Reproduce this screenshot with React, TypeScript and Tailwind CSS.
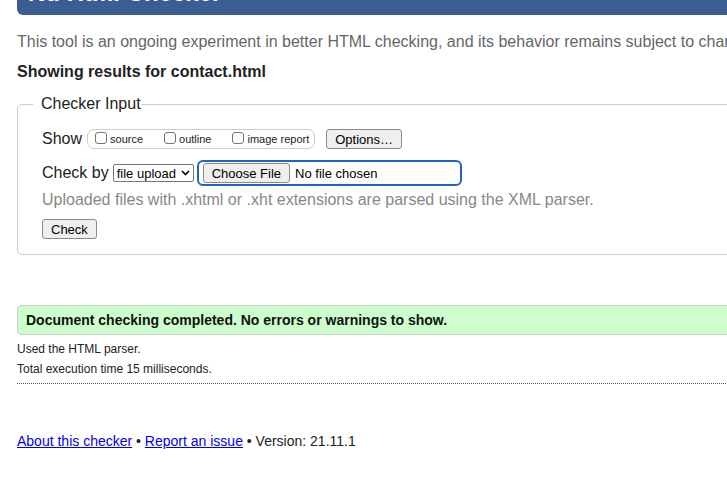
import React from "react";

function MacButton({ children }: { children: React.ReactNode }) {
  return (
    <button className="h-[20px] px-[8px] border border-[#8a8a8a] rounded-[3px] bg-[#efefef] text-[13px] leading-none text-black">
      {children}
    </button>
  );
}

function Box({ label }: { label: string }) {
  return (
    <label className="flex items-center">
      <input
        type="checkbox"
        className="appearance-none w-[12px] h-[12px] border border-[#767676] rounded-[3px] bg-white -mt-[3px]"
      />
      <span className="ml-[3px] text-[11px] leading-none text-[#222]">{label}</span>
    </label>
  );
}

export default function App() {
  return (
    <div className="w-[727px] h-[483px] overflow-hidden bg-white font-['Liberation_Sans',Arial,sans-serif] text-[#222]">
      <div className="w-[1100px] pl-[17px]">
        {/* header, scrolled mostly out of view */}
        <div className="h-[15px] bg-[#3a5e93] rounded-bl-[6px] overflow-hidden">
          <h1 className="-mt-[19px] pl-[11px] text-[24px] leading-[24px] font-bold text-white">Nu Html Checker</h1>
        </div>

        <p className="mt-[17px] text-[16px] leading-[20px] text-[#666]">
          This tool is an ongoing experiment in better HTML checking, and its behavior remains subject to change
        </p>
        <p className="mt-[10px] text-[16px] leading-[20px] font-bold text-[#222]">Showing results for contact.html</p>

        <fieldset className="mt-[12px] border border-[#cccccc] rounded-[5px] pl-[24px] pt-[15px] pb-[15px]">
          <legend className="-ml-[9px] pl-[8px] text-[16px] leading-[20px] text-[#222]">Checker Input</legend>

          <div className="flex items-center h-[20px]">
            <span className="text-[16px] leading-[20px]">Show</span>
            <div className="ml-[5px] h-[20px] flex items-center gap-[21px] pl-[7px] pr-[5px] border border-[#cccccc] rounded-[7px]">
              <Box label="source" />
              <Box label="outline" />
              <Box label="image report" />
            </div>
            <div className="ml-[11px] flex">
              <MacButton>Options…</MacButton>
            </div>
          </div>

          <div className="flex items-center mt-[11px] h-[26px]">
            <span className="text-[16px] leading-[20px]">Check by</span>
            <div className="ml-[4px] h-[18px] w-[81px] flex items-center justify-between pl-[3px] pr-[3px] border border-[#767676] rounded-[2px] bg-white text-[13px] leading-none text-black">
              <span>file upload</span>
              <svg width="9" height="6" viewBox="0 0 9 6">
                <path d="M1 1l3.5 3.5L8 1" fill="none" stroke="#000" strokeWidth="1.6" />
              </svg>
            </div>
            <div className="ml-[3px] h-[26px] w-[265px] flex items-center pl-[4px] border-2 border-[#1f63c6] rounded-[6px]">
              <MacButton>Choose File</MacButton>
              <span className="ml-[5px] text-[13px] leading-none text-black">No file chosen</span>
            </div>
          </div>

          <p className="mt-[4px] text-[16px] leading-[20px] text-[#888]">
            Uploaded files with .xhtml or .xht extensions are parsed using the XML parser.
          </p>
          <div className="mt-[9px] flex">
            <MacButton>Check</MacButton>
          </div>
        </fieldset>

        <div className="mt-[50px] h-[30px] flex items-center pl-[8px] bg-[#ccffcc] border border-[#cccccc] rounded-l-[4px]">
          <p className="text-[14px] font-bold text-[#111]">Document checking completed. No errors or warnings to show.</p>
        </div>

        <div className="pt-[4px] pb-[4px] border-b border-dotted border-[#555]">
          <p className="text-[12px] leading-[20px] text-[#222]">Used the HTML parser.</p>
          <p className="text-[12px] leading-[20px] text-[#222]">Total execution time 15 milliseconds.</p>
        </div>

        <p className="mt-[47px] text-[14px] leading-[20px] text-[#222]">
          <a href="#" className="text-[#0000ee] underline">About this checker</a>
          {" • "}
          <a href="#" className="text-[#0000ee] underline">Report an issue</a>
          {" • Version: 21.11.1"}
        </p>
      </div>
    </div>
  );
}
